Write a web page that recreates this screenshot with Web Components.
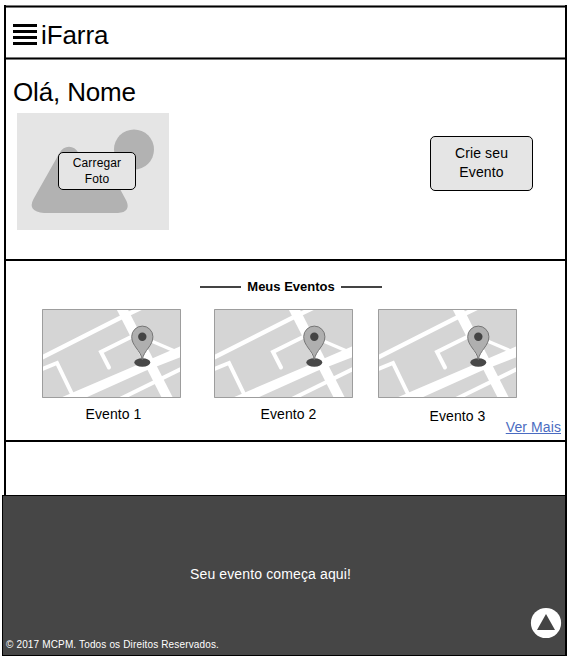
<!DOCTYPE html>
<html lang="pt">
<head>
<meta charset="utf-8">
<title>iFarra</title>
<style>
html,body{margin:0;background:#fff}
body{font-family:"Liberation Sans",Arial,sans-serif;color:#000;width:571px;height:660px;overflow:hidden}
</style>
</head>
<body>
<farra-app></farra-app>
<script>
function define(name, html) {
  const template = document.createElement('template');
  template.innerHTML = html;
  customElements.define(name, class extends HTMLElement {
    constructor() {
      super();
      this.attachShadow({mode: 'open'}).append(template.content.cloneNode(true));
    }
  });
}

define('menu-icon', `
<style>:host{display:block;width:24px;height:21px}svg{display:block}</style>
<svg width="24" height="21" shape-rendering="crispEdges"><path d="M0 0h24v3H0zM0 6h24v3H0zM0 12h24v3H0zM0 18h24v3H0z"/></svg>`);

define('farra-header', `
<style>
:host{display:flex;align-items:flex-start;box-sizing:border-box;height:53px;border-top:1px solid #000;border-bottom:1px solid #000;box-shadow:0 1px #777,0 -1px #777,inset 0 1px #777,inset 0 -1px #777;padding:17px 0 0 7px;font-size:26px;line-height:30px}
menu-icon{margin-right:4px}
.t{margin-top:-4px;letter-spacing:-.1px}
</style>
<menu-icon></menu-icon><div class="t"><slot></slot></div>`);

define('farra-button', `
<style>
:host{display:flex;align-items:center;justify-content:center;box-sizing:border-box;text-align:center;background:#e5e5e5;border:1px solid #000;border-radius:5px}
</style>
<div><slot></slot></div>`);

define('photo-upload', `
<style>
:host{display:grid;width:152px;height:117px;background:#e5e5e5}
svg,farra-button{grid-area:1/1}
farra-button{width:78px;height:38px;margin:39px 0 0 41px;font-size:12px;line-height:16px;letter-spacing:.15px}
</style>
<svg width="152" height="117" fill="#b2b2b2"><circle cx="117" cy="36.5" r="20"/><path d="M16.5 86L42.5 40Q46 33.7 52 33.7T61.500 40L80 60L103 76L109.500 88Q114 99 101 100H27Q10 98.500 16.500 86Z"/></svg>
<farra-button><slot></slot></farra-button>`);

define('farra-profile', `
<style>
:host{display:grid;grid-template-columns:417px 103px;box-sizing:border-box;height:202px;padding:18px 0 0 7px;border-bottom:2px solid #000}
h1{margin:0 0 6px;font-size:26px;line-height:30px;font-weight:400;letter-spacing:-.15px}
photo-upload{margin-left:4px}
.create{margin-top:58.5px;height:55px;font-size:14px;line-height:19px;letter-spacing:.12px}
</style>
<div><h1><slot name="greeting"></slot></h1><photo-upload>Carregar<br>Foto</photo-upload></div>
<farra-button class="create">Crie seu<br>Evento</farra-button>`);

define('event-map', `
<style>:host{display:block}svg{display:block}</style>
<svg width="139" height="89" fill="none" stroke="#fff">
<path d="M0 0h139v89H0z" fill="#d5d5d5" stroke="none"/>
<path d="M-2 49.500L76 10L101-2" stroke-width="4.300"/>
<path d="M77.500-5L128 94" stroke-width="10"/>
<path d="M18 89L88 59L139 37V48L103 62L43 89Z" fill="#fff" stroke="none"/>
<path d="M76 91L141 59" stroke-width="4"/>
<path d="M-1 60.500L15 54L30 85" stroke-width="4"/>
<path d="M91 27L59 43L67 58.500" stroke-width="4" stroke-linecap="round"/>
<path d="M107 31L135 43" stroke-width="3.500"/>
<path d="M.5.5h138v88H.5z" stroke="#9d9d9d"/>
<ellipse cx="100.300" cy="53.500" rx="8" ry="4.200" fill="#484848" stroke="none"/>
<path d="M100.300 50.500C98.500 41 89.700 37 89.700 27.700a10.600 10.600 0 0 1 21.200 0C110.900 37 102.100 41 100.300 50.500Z" fill="#afafaf" stroke="#757575" stroke-width="1"/>
<circle cx="100.300" cy="27.700" r="4.200" fill="#444" stroke="none"/>
</svg>`);

define('event-card', `
<style>
:host{display:block;width:139px;font-size:14px;line-height:16px;letter-spacing:.08px}
div{text-align:center;margin-top:var(--label-top,8px);padding-left:var(--label-shift,0)}
</style>
<event-map></event-map><div><slot></slot></div>`);

define('section-title', `
<style>
:host{display:flex;align-items:center;width:182px;gap:6px;font-size:13px;line-height:16px;font-weight:700}
i{flex:1;height:2px;background:#444}
</style>
<i></i><span><slot></slot></span><i></i>`);

define('farra-events', `
<style>
:host{display:grid;grid-template-rows:30px 118px 14px;box-sizing:border-box;height:181px;padding-top:18px;border-bottom:2px solid #000}
section-title{margin-left:194px;align-self:start}
.cards{display:grid;grid-template-columns:172px 164px 139px;padding-left:36px}
.one{--label-shift:4px}
.two{--label-shift:10px}
.three{--label-top:10px;--label-shift:20px}
a{justify-self:end;margin-right:4px;font-size:14px;line-height:16px;letter-spacing:.1px;color:#4b6cc1;text-decoration:underline;margin-top:-8px}
</style>
<section-title>Meus Eventos</section-title>
<div class="cards"><event-card class="one">Evento 1</event-card><event-card class="two">Evento 2</event-card><event-card class="three">Evento 3</event-card></div>
<a>Ver Mais</a>`);

define('top-button', `
<style>:host{display:block;width:32px;height:32px}svg{display:block}</style>
<svg width="32" height="32"><circle cx="16" cy="16" r="15.100" fill="#fff"/><path d="M16 7L25 23H7Z" fill="#444"/></svg>`);

define('farra-footer', `
<style>
:host{display:grid;grid-template:106px 1fr/1fr auto;box-sizing:border-box;width:565px;height:161px;margin-left:2px;background:#464646;border:1px solid #000;border-right-width:2px;color:#fff}
.msg{grid-column:1/3;margin:70px 0 0 187px;font-size:14px;line-height:16px;letter-spacing:.13px}
.copy{align-self:end;margin:0 0 4px 3px;font-size:10px;line-height:12px;letter-spacing:.15px}
top-button{margin:5px 3px 0 0}
</style>
<div class="msg"><slot></slot></div>
<div class="copy"><slot name="copy"></slot></div>
<top-button></top-button>`);

define('farra-app', `
<style>
:host{display:block;padding-top:5px}
main{box-sizing:border-box;width:563px;height:490px;margin-left:4px;border:solid #000;border-width:0 2px;padding-top:1px}
</style>
<main>
<farra-header>iFarra</farra-header>
<farra-profile><span slot="greeting">Olá, Nome</span></farra-profile>
<farra-events></farra-events>
</main>
<farra-footer>Seu evento começa aqui!<span slot="copy">© 2017 MCPM. Todos os Direitos Reservados.</span></farra-footer>`);
</script>
</body>
</html>
